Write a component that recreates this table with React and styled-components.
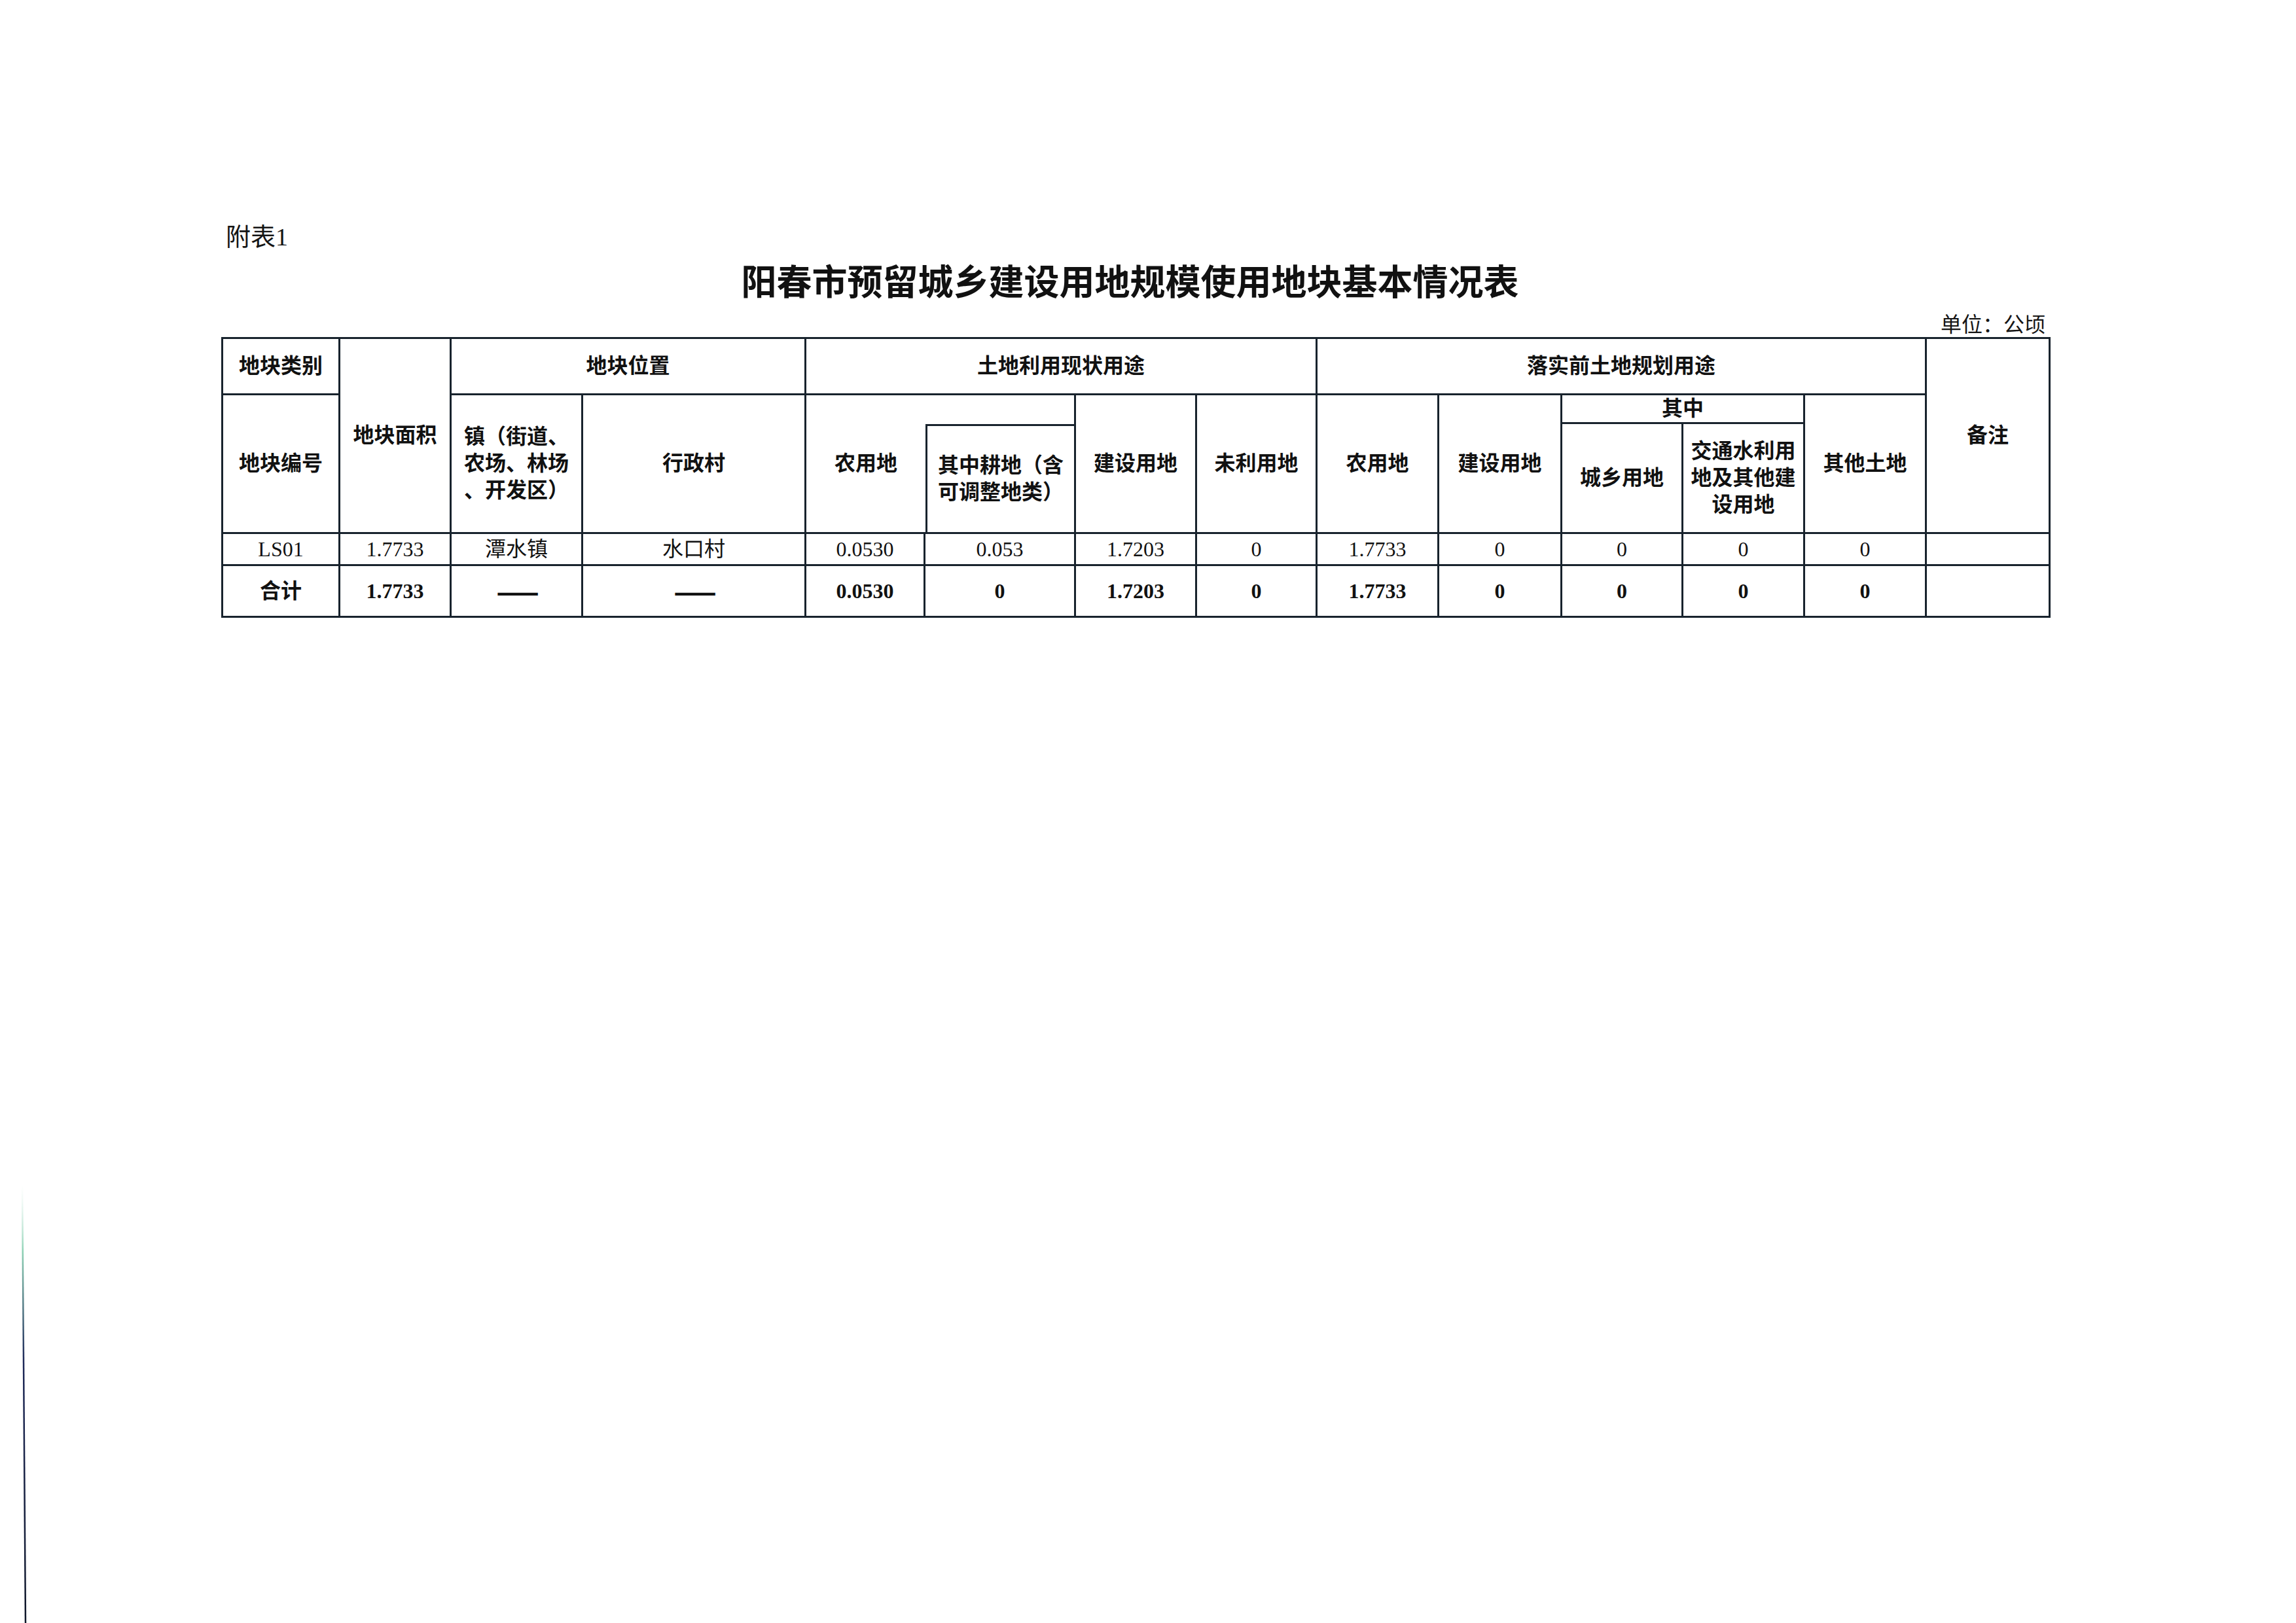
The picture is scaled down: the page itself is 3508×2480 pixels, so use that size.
import React from "react";
import styled, { createGlobalStyle } from "styled-components";

const LINE = "3px solid #18232d";
const FONT = '"Liberation Serif", "Noto Sans CJK SC", serif';

const Global = createGlobalStyle`
  html, body { margin: 0; padding: 0; background: #ffffff; }
  body { font-family: ${FONT}; color: #111; }
`;

const Page = styled.div`
  position: relative;
  width: 3508px;
  height: 2480px;
  box-sizing: border-box;
  padding-top: 337px;
  background: #fff;
  overflow: hidden;
`;

const Sheet = styled.div`
  width: 2795px;
  margin-left: 338px;
  display: flex;
  flex-direction: column;
`;

const Caption = styled.div`
  font-family: ${FONT};
  font-size: 38px;
  line-height: 50px;
  padding-left: 7px;
  color: #151515;
`;

const Title = styled.h1`
  margin: 11px 0 0;
  padding-right: 18px;
  text-align: center;
  font-family: ${FONT};
  font-weight: 700;
  font-size: 54px;
  line-height: 70px;
  color: #111;
`;

const Unit = styled.div`
  margin-top: 9px;
  text-align: right;
  padding-right: 8px;
  font-size: 32px;
  line-height: 38px;
  color: #151515;
`;

const Grid = styled.div`
  display: grid;
  grid-template-columns: 179px 170px 201px 341px 182px 230px 185px 184px 186px 188px 185px 186px 186px 189px;
  grid-template-rows: 86px 44px 168px 49px 79px;
  border-top: ${LINE};
  border-left: ${LINE};
  width: max-content;
`;

const Cell = styled.div`
  box-sizing: border-box;
  grid-column: ${(p) => p.$c} / span ${(p) => p.$cs || 1};
  grid-row: ${(p) => p.$r} / span ${(p) => p.$rs || 1};
  display: flex;
  align-items: center;
  justify-content: center;
  text-align: center;
  border-right: ${(p) => (p.$noRight ? "none" : LINE)};
  border-bottom: ${(p) => (p.$noBottom ? "none" : LINE)};
  border-left: ${(p) => (p.$left ? LINE : "none")};
  border-top: ${(p) => (p.$top ? LINE : "none")};
  font-family: ${FONT};
  color: #111;
`;

const Head = styled(Cell)`
  font-weight: 700;
  font-size: 32px;
  line-height: 41px;
`;

const Data = styled(Cell)`
  font-weight: ${(p) => (p.$bold ? 700 : 400)};
  font-size: 32px;
  line-height: 36px;
`;

const Lines = styled.span`
  display: block;
  text-align: ${(p) => p.$align || "center"};
  white-space: nowrap;
`;

const Dash = styled.span`
  font-family: "Noto Sans CJK SC", sans-serif;
  font-weight: 900;
  font-size: 38px;
  letter-spacing: -4px;
`;

const ScanEdge = styled.svg`
  position: absolute;
  left: 28px;
  top: 1810px;
  width: 16px;
  height: 670px;
`;

const rows = [
  { bold: false, cells: ["LS01", "1.7733", "潭水镇", "水口村", "0.0530", "0.053", "1.7203", "0", "1.7733", "0", "0", "0", "0", ""] },
  { bold: true, cells: ["合计", "1.7733", "——", "——", "0.0530", "0", "1.7203", "0", "1.7733", "0", "0", "0", "0", ""] },
];

export default function App() {
  return (
    <>
      <Global />
      <Page>
        <Sheet>
          <Caption>附表1</Caption>
          <Title>阳春市预留城乡建设用地规模使用地块基本情况表</Title>
          <Unit>单位：公顷</Unit>
          <Grid>
            <Head $c={1} $r={1}>地块类别</Head>
            <Head $c={1} $r={2} $rs={2}>地块编号</Head>
            <Head $c={2} $r={1} $rs={3}>地块面积</Head>
            <Head $c={3} $r={1} $cs={2}>地块位置</Head>
            <Head $c={3} $r={2} $rs={2}>
              <Lines $align="left">镇（街道、<br />农场、林场<br />、开发区）</Lines>
            </Head>
            <Head $c={4} $r={2} $rs={2}>行政村</Head>
            <Head $c={5} $r={1} $cs={4}>土地利用现状用途</Head>
            <Head $c={5} $r={2} $rs={2} $noRight>农用地</Head>
            <Head $c={6} $r={2} $noBottom />
            <Head $c={6} $r={3} $left $top>
              <Lines $align="left">其中耕地（含<br />可调整地类）</Lines>
            </Head>
            <Head $c={7} $r={2} $rs={2}>建设用地</Head>
            <Head $c={8} $r={2} $rs={2}>未利用地</Head>
            <Head $c={9} $r={1} $cs={5}>落实前土地规划用途</Head>
            <Head $c={9} $r={2} $rs={2}>农用地</Head>
            <Head $c={10} $r={2} $rs={2}>建设用地</Head>
            <Head $c={11} $r={2} $cs={2}>其中</Head>
            <Head $c={11} $r={3}>城乡用地</Head>
            <Head $c={12} $r={3}>
              <Lines>交通水利用<br />地及其他建<br />设用地</Lines>
            </Head>
            <Head $c={13} $r={2} $rs={2}>其他土地</Head>
            <Head $c={14} $r={1} $rs={3}>备注</Head>
            {rows.map((row, ri) =>
              row.cells.map((v, ci) => (
                <Data key={`${ri}-${ci}`} $c={ci + 1} $r={4 + ri} $bold={row.bold}>
                  {v === "——" ? <Dash>——</Dash> : v}
                </Data>
              ))
            )}
          </Grid>
        </Sheet>
        <ScanEdge viewBox="0 0 16 670" preserveAspectRatio="none">
          <defs>
            <linearGradient id="edge" x1="0" y1="0" x2="0" y2="1">
              <stop offset="0" stopColor="#d8f0e6" stopOpacity="0" />
              <stop offset="0.15" stopColor="#8fd3b6" />
              <stop offset="0.4" stopColor="#1f2a5a" />
              <stop offset="1" stopColor="#10182a" />
            </linearGradient>
          </defs>
          <line x1="6" y1="0" x2="11" y2="670" stroke="url(#edge)" strokeWidth="2.5" />
        </ScanEdge>
      </Page>
    </>
  );
}
